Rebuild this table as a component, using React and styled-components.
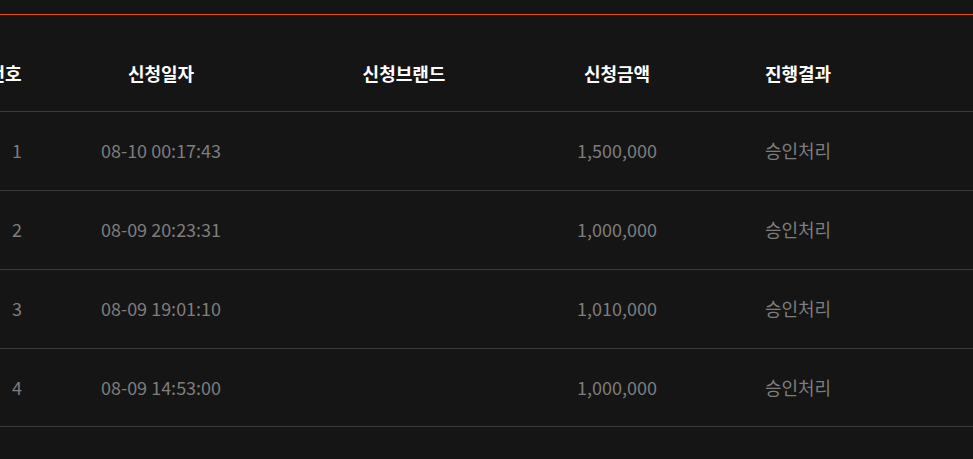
import React from "react";
import styled, { createGlobalStyle } from "styled-components";

const Global = createGlobalStyle`
  html, body { margin: 0; padding: 0; background: #151515; overflow: hidden; }
  body { font-family: "Noto Sans CJK KR", "Noto Sans", sans-serif; }
`;

const Page = styled.div`
  width: 973px;
  height: 459px;
  background: #151515;
  padding-top: 14px;
  box-sizing: border-box;
  overflow: hidden;
`;

const Table = styled.div`
  margin-left: -30px;
  width: 1040px;
  border-top: 1px solid #e8500a;
`;

const Row = styled.div`
  display: grid;
  grid-template-columns: 70px 242px 244px 182px 180px 1fr;
  border-bottom: 1px solid #3a3a3a;
  box-sizing: border-box;
  padding: ${(p) => (p.$head ? "45px 0 25px" : "25px 0 27px")};
  &:last-child {
    padding-bottom: 26px;
  }
`;

const Cell = styled.div`
  text-align: center;
  font-size: 18px;
  line-height: 26px;
  white-space: nowrap;
  color: ${(p) => (p.$head ? "#ffffff" : "#7d7d7d")};
  font-weight: ${(p) => (p.$head ? 700 : 400)};
  padding-left: ${(p) => (p.$shift ? "24px" : "0")};
`;

const heads = ["번호", "신청일자", "신청브랜드", "신청금액", "진행결과", ""];
const rows = [
  ["1", "08-10 00:17:43", "", "1,500,000", "승인처리"],
  ["2", "08-09 20:23:31", "", "1,000,000", "승인처리"],
  ["3", "08-09 19:01:10", "", "1,010,000", "승인처리"],
  ["4", "08-09 14:53:00", "", "1,000,000", "승인처리"],
];

export default function App() {
  return (
    <Page>
      <Global />
      <Table>
        <Row $head>
          {heads.map((h, i) => (
            <Cell $head key={i}>{h}</Cell>
          ))}
        </Row>
        {rows.map((r, i) => (
          <Row key={i}>
            {r.map((c, j) => (
              <Cell key={j} $shift={j === 0}>{c}</Cell>
            ))}
            <Cell />
          </Row>
        ))}
      </Table>
    </Page>
  );
}
